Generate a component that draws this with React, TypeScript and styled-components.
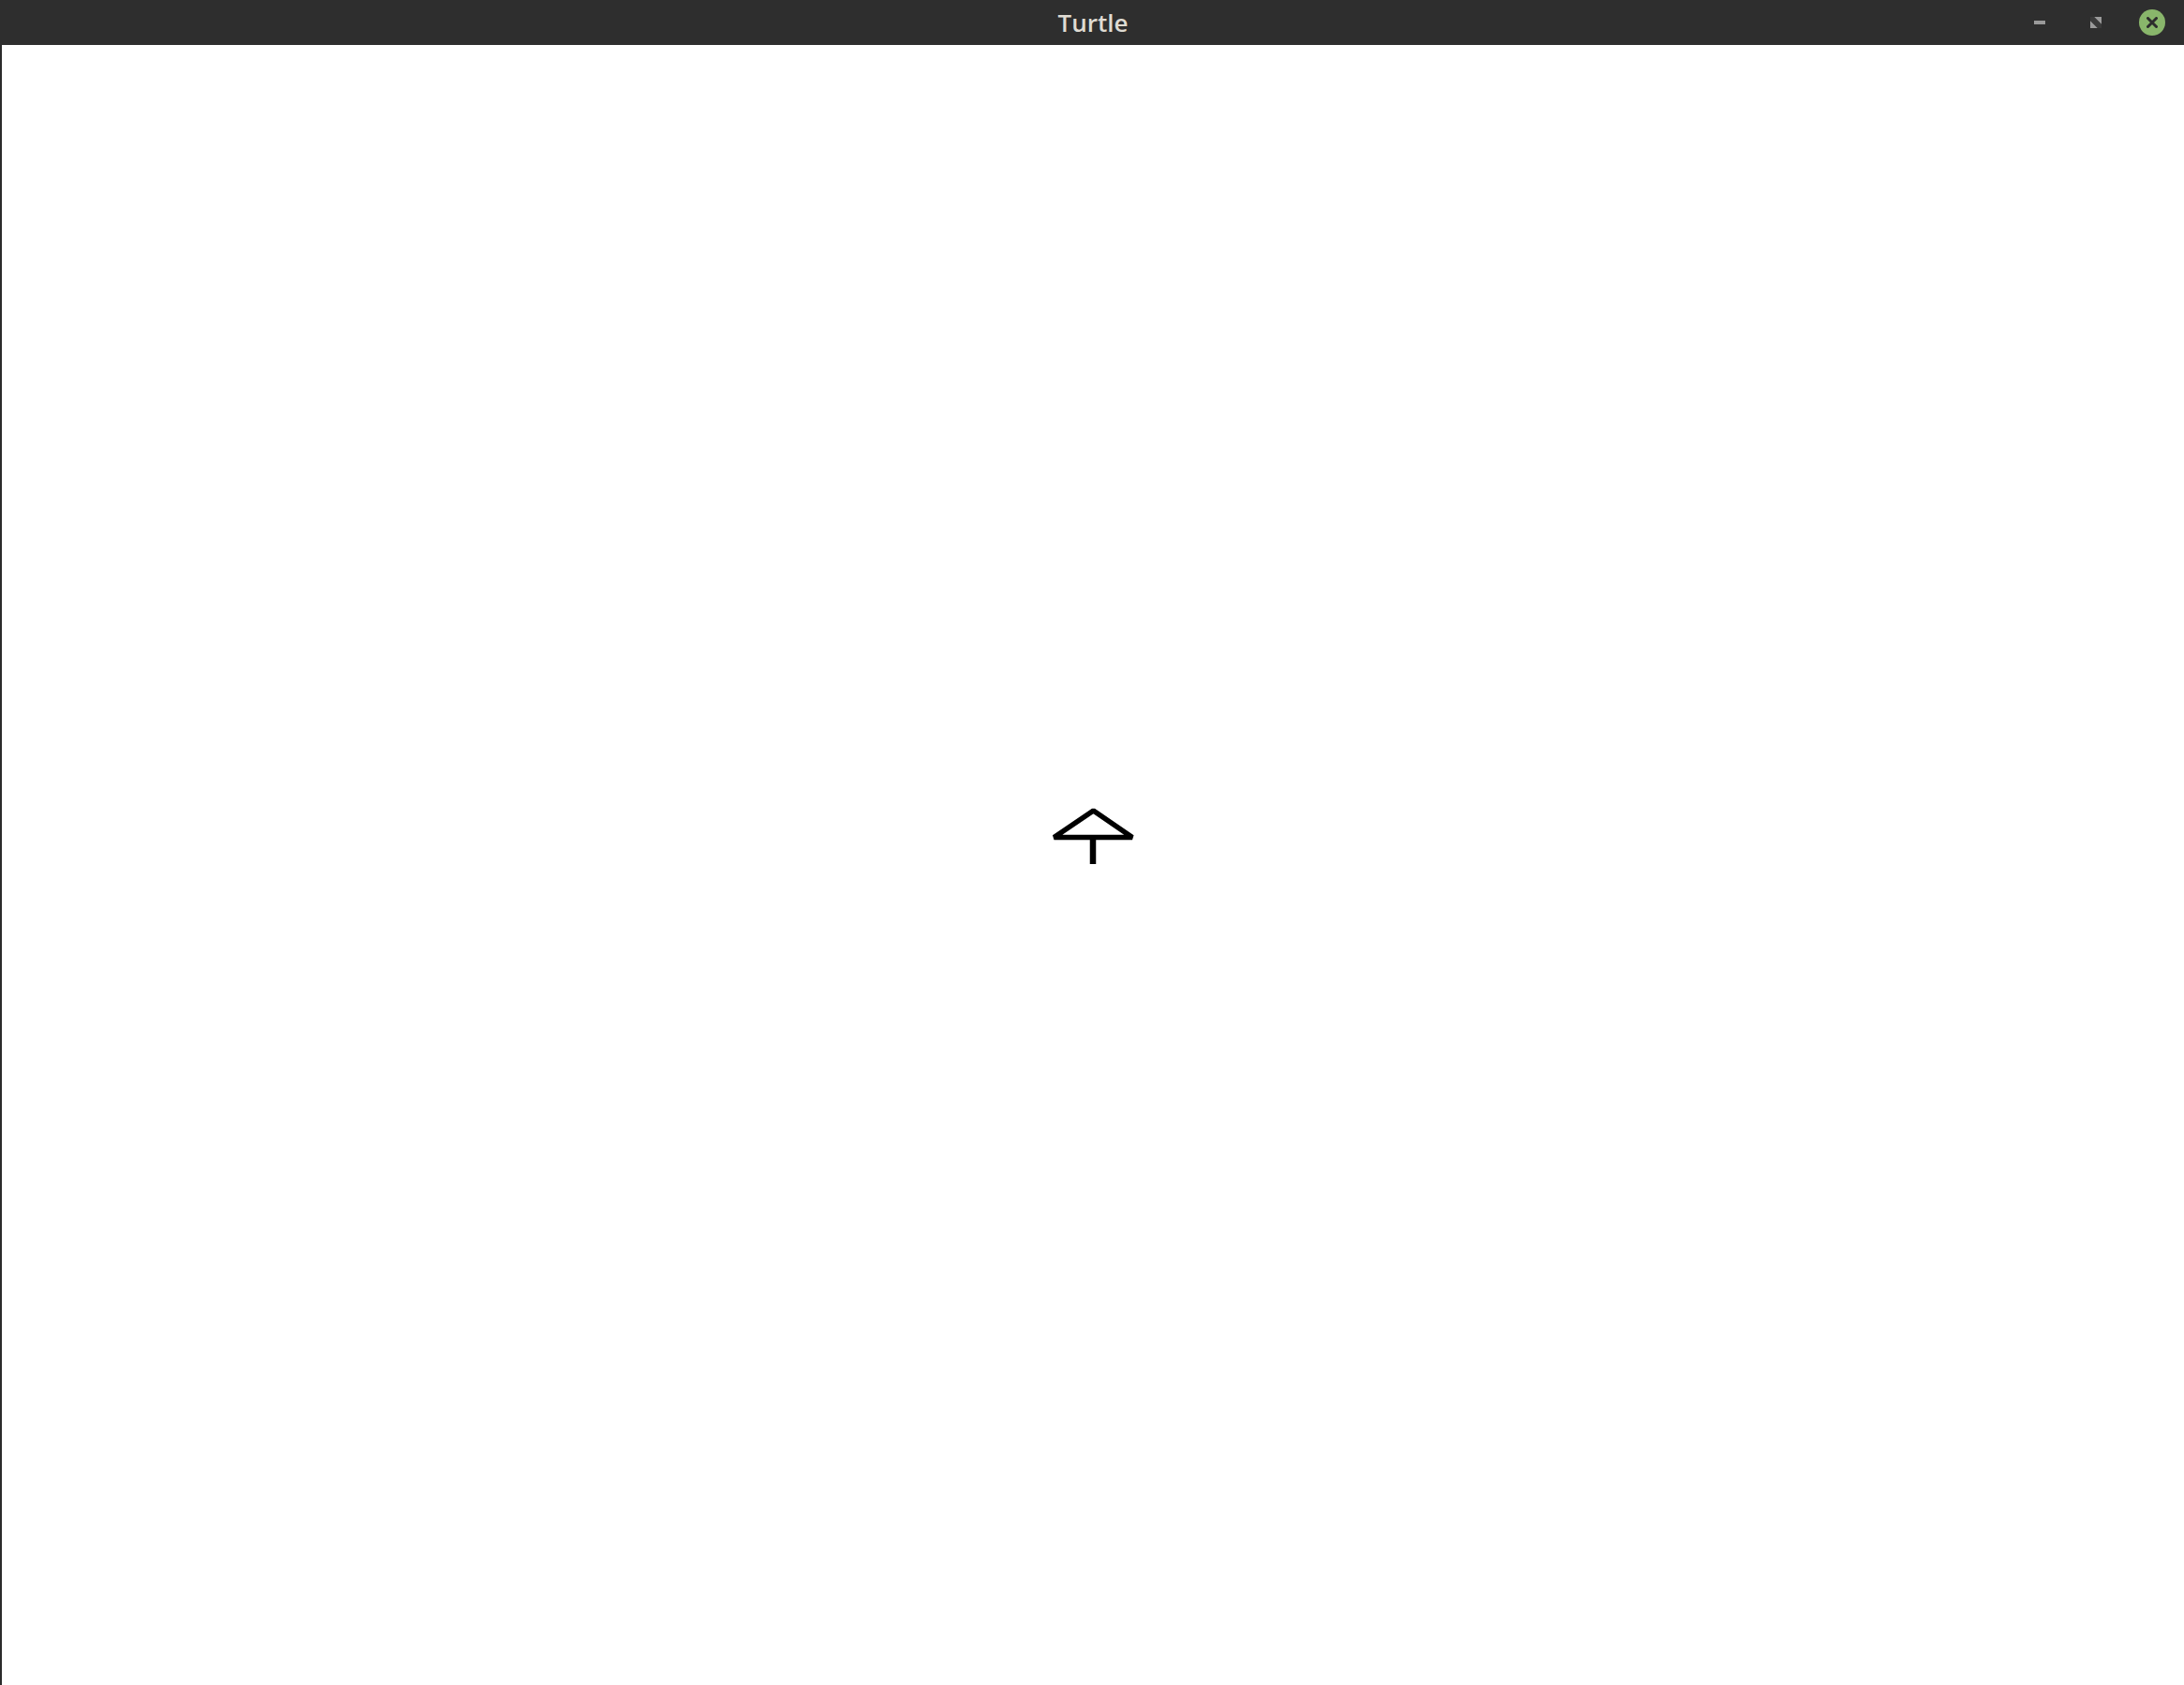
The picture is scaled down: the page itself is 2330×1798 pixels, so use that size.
import React from "react";
import styled, { createGlobalStyle } from "styled-components";

const Global = createGlobalStyle`
  html, body { margin: 0; padding: 0; height: 100%; background: #2b2b2b; }
  #root { height: 100vh; }
  * { box-sizing: border-box; }
`;

const Window = styled.div`
  display: flex;
  flex-direction: column;
  height: 100vh;
  width: 100vw;
  overflow: hidden;
`;

const TitleBar = styled.div`
  height: 48px;
  flex: 0 0 48px;
  background: #2e2e2e;
  display: grid;
  grid-template-columns: 1fr auto 1fr;
  align-items: center;
`;

const Title = styled.div`
  grid-column: 2;
  font-family: "Open Sans", "DejaVu Sans", sans-serif;
  font-size: 26px;
  font-weight: 600;
  color: #dfdbd2;
  line-height: 48px;
  margin-left: 2px;
`;

const Controls = styled.div`
  grid-column: 3;
  justify-self: end;
  display: flex;
  align-items: center;
  height: 48px;
  padding-right: 20px;
`;

const ControlButton = styled.div<{ $w: number; $ml: number }>`
  width: ${(p) => p.$w}px;
  height: 28px;
  margin-left: ${(p) => p.$ml}px;
  display: flex;
  align-items: center;
  justify-content: center;
`;

const CloseCircle = styled.div`
  width: 28px;
  height: 28px;
  border-radius: 50%;
  background: #89b66b;
  display: flex;
  align-items: center;
  justify-content: center;
`;

const Body = styled.div`
  flex: 1;
  display: flex;
  background: #2b2b2b;
`;

const Canvas = styled.div`
  flex: 1;
  margin-left: 2px;
  background: #ffffff;
  position: relative;
`;

const Drawing = styled.svg`
  display: block;
  width: 100%;
  height: 100%;
`;

export default function App() {
  // canvas origin in page coords: (2, 48)
  const ox = 2;
  const oy = 48;
  const L = (x: number) => x - ox;
  const T = (y: number) => y - oy;
  return (
    <>
      <Global />
      <Window>
        <TitleBar>
          <Title>Turtle</Title>
          <Controls>
            <ControlButton $w={12} $ml={0}>
              <svg width="12" height="4" viewBox="0 0 12 4">
                <rect x="0" y="0" width="12" height="4" fill="#9a9a9a" />
              </svg>
            </ControlButton>
            <ControlButton $w={12} $ml={48}>
              <svg width="12" height="12" viewBox="0 0 12 12">
                <polygon points="4,0 12,0 12,8" fill="#9a9a9a" />
                <polygon points="0,4 0,12 8,12" fill="#9a9a9a" />
                <polygon points="0,0 4,0 12,8 12,12 8,12 0,4" fill="#3a3a3a" />
              </svg>
            </ControlButton>
            <ControlButton $w={28} $ml={40}>
              <CloseCircle>
                <svg width="12" height="12" viewBox="0 0 12 12">
                  <path d="M1.5 1.5 L10.5 10.5 M10.5 1.5 L1.5 10.5" stroke="#2d2d2d" strokeWidth="3" strokeLinecap="round" />
                </svg>
              </CloseCircle>
            </ControlButton>
          </Controls>
        </TitleBar>
        <Body>
          <Canvas>
            <Drawing viewBox="0 0 2328 1750" preserveAspectRatio="xMinYMin meet">
              <polygon
                points={`${L(1124.5)},${T(893.5)} ${L(1166.5)},${T(865)} ${L(1208)},${T(893.5)}`}
                fill="none"
                stroke="#000"
                strokeWidth="5.5"
                strokeLinejoin="bevel"
              />
              <line
                x1={L(1166)}
                y1={T(894)}
                x2={L(1166)}
                y2={T(922)}
                stroke="#000"
                strokeWidth="6.5"
              />
            </Drawing>
          </Canvas>
        </Body>
      </Window>
    </>
  );
}
